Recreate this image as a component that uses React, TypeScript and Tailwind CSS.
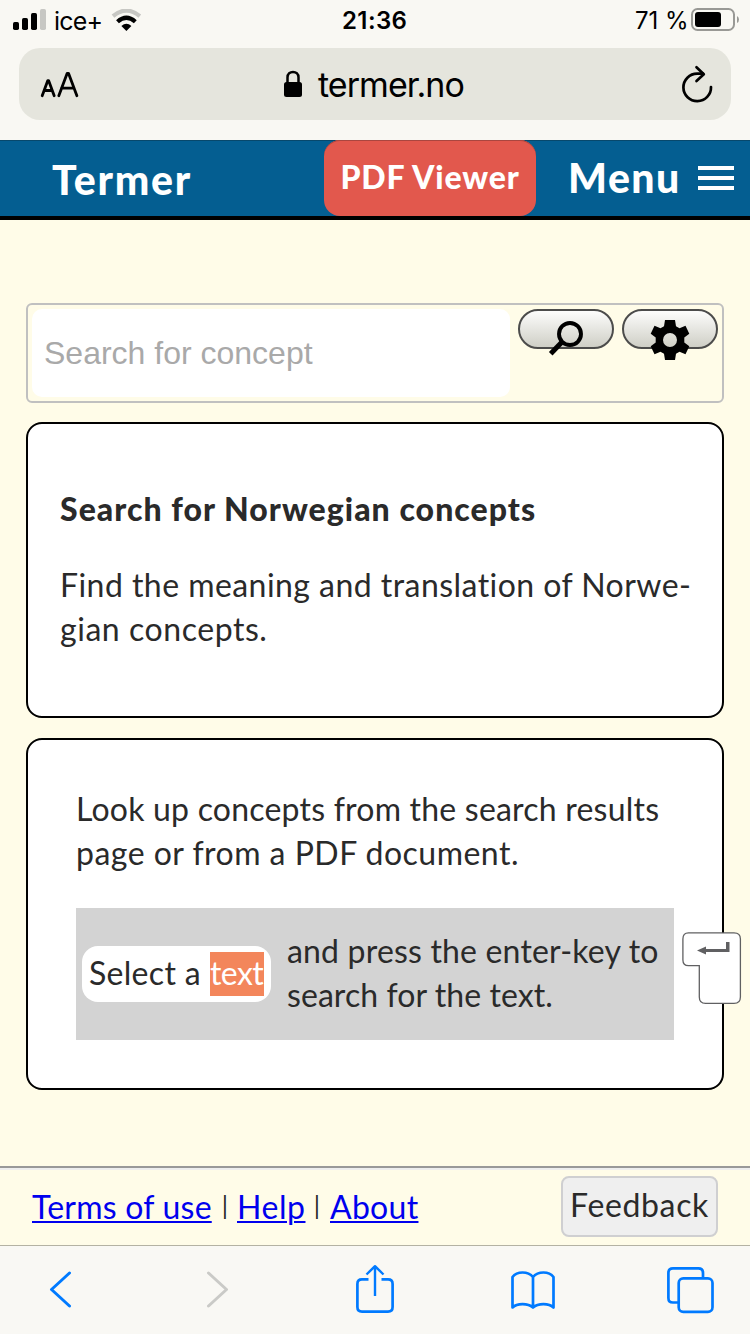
import type { ReactNode } from 'react';

function StatusBar() {
  return (
    <div className="flex h-10 shrink-0 items-start">
      <svg className="ml-[13px] mt-[9px] h-[21px] w-[33px] shrink-0" viewBox="0 0 33 21">
        <rect x="0" y="13" width="6" height="8" rx="1.7" />
        <rect x="9" y="9" width="6" height="12" rx="1.7" />
        <rect x="18" y="4" width="6" height="17" rx="1.7" />
        <rect x="27" y="0" width="6" height="21" rx="1.7" fill="#c7c7c3" />
      </svg>
      <span className="ml-2 mt-[5px] w-[50px] whitespace-nowrap text-[25px] leading-8 tracking-[-0.8px]">ice+</span>
      <svg className="ml-[7px] mt-[9px] h-[22px] w-[31px] shrink-0" viewBox="0 0 31 22" fill="none">
        <path d="M2 7.2Q15.400 -4 28.800 7.200" stroke="#c7c7c3" strokeWidth="4.200" />
        <path d="M6.500 12.800Q15.400 4.800 24.300 12.800" stroke="#000" strokeWidth="4.200" />
        <path d="M10.400 17.100Q15.400 12.600 20.400 17.100L15.400 22Z" fill="#000" />
      </svg>
      <span className="ml-[200px] mt-[5px] w-[80px] whitespace-nowrap text-2xl font-semibold leading-8 tracking-[0.4px]">21:36</span>
      <span className="ml-[213px] mt-[5px] w-[54px] whitespace-nowrap text-2xl leading-8">71 %</span>
      <svg className="ml-[2px] mt-2 h-[23px] w-[49px] shrink-0" viewBox="0 0 49 23" fill="none">
        <rect x="1" y="1" width="42" height="21" rx="5.500" stroke="#999995" strokeWidth="2" />
        <rect x="4" y="4" width="26" height="15" rx="3" fill="#000" />
        <path d="M46 8Q48 9 48 11.500Q48 14 46 15Z" fill="#999995" />
      </svg>
    </div>
  );
}

function AddressBar() {
  return (
    <div className="mx-[19px] mt-2 flex h-[72px] shrink-0 items-start rounded-[21px] bg-[#e5e5dd]">
      <svg className="ml-[21px] mt-[23px] h-[28px] w-[40px] shrink-0" viewBox="0 0 40 28" fill="none" stroke="#000" strokeWidth="2.800" strokeLinecap="round" strokeLinejoin="round">
        <path d="M2.200 24.700 7.800 9.600h.8L14.200 24.700M4.200 19.500h8" />
        <path d="M18.800 24.700 27.200 2.300h1.300L36.900 24.700M21.500 17.200h12.500" />
      </svg>
      <svg className="ml-[204px] mt-[22px] h-[27px] w-[18px] shrink-0" viewBox="0 0 18 27" fill="none">
        <path d="M3.500 13V7.500C3.500 0 14.500 0 14.500 7.500V13" stroke="#000" strokeWidth="2.500" />
        <rect x="0" y="12" width="18" height="15" rx="2.500" fill="#000" />
      </svg>
      <span className="ml-[16px] mt-[17px] w-[160px] whitespace-nowrap text-[34px] leading-10 tracking-[-0.95px]">termer.no</span>
      <svg className="ml-[203px] mt-[17px] h-[38px] w-[32px] shrink-0" viewBox="0 0 32 38" fill="none" stroke="#000" strokeWidth="2.700" strokeLinecap="round" strokeLinejoin="round">
        <path d="M30 22A13.800 13.800 0 1 1 16.200 8.600H22" />
        <path d="M15.500 2.300 22.800 9.200 15.500 16" />
      </svg>
    </div>
  );
}

function NavBar() {
  return (
    <header className="flex h-20 shrink-0 items-start border-b-4 border-black bg-[#045e91] font-bold text-white shadow-[inset_0_1px_0_#07486c]">
      <span className="ml-[52px] mt-[15px] w-[272px] text-[41px] font-black leading-[50px] tracking-[1.800px]">Termer</span>
      <button className="h-[76px] w-[212px] shrink-0 whitespace-nowrap rounded-2xl bg-[#e2584d] pb-[2px] text-center text-[32px] font-black leading-10 tracking-[0.850px] shadow-[inset_0_1px_0_#aa463f]">
        PDF Viewer
      </button>
      <span className="ml-[32px] mt-[13px] w-[130px] text-[41px] font-black leading-[50px] tracking-[1.500px]">Menu</span>
      <svg className="mt-[26px] h-6 w-9 shrink-0" viewBox="0 0 36 24" fill="#fff">
        <path d="M0 0h36v4H0zM0 10h36v4H0zM0 20h36v4H0z" />
      </svg>
    </header>
  );
}

function ToolButton({ label, children }: { label: string; children: ReactNode }) {
  return (
    <button
      aria-label={label}
      className="ml-2 flex h-10 w-24 shrink-0 items-start justify-center rounded-full border-2 border-[#4c4c4b] bg-linear-to-b from-[#fdfdfc] to-[#cfcfc6]"
    >
      {children}
    </button>
  );
}

function SearchForm() {
  return (
    <form className="flex h-[100px] shrink-0 items-start rounded-md border-2 border-[#c0c0c0] p-1">
      <input
        placeholder="Search for concept"
        className="h-[88px] w-[478px] rounded-[10px] bg-white pl-3 font-['Liberation_Sans',sans-serif] text-[32px] placeholder:text-[#a9a9a9]"
      />
      <ToolButton label="Search">
        <svg className="-ml-[2px] mt-[9px] h-9 w-9 shrink-0" viewBox="0 0 36 36" fill="none" stroke="#000">
          <circle cx="23" cy="14" r="11" strokeWidth="3.900" />
          <path d="M14.500 22.500 3.700 33.700" strokeWidth="5" />
        </svg>
      </ToolButton>
      <ToolButton label="Settings">
        <svg className="mt-[9px] h-10 w-10 shrink-0" viewBox="0 0 40 40">
          <path
            fillRule="evenodd"
            d="M15 0H25L26 6.200 29.500 8.200 35.500 5.800 39.300 13.700 34.300 17.500V22.500L39.300 26.300 35.500 34.200 29.500 31.800 26 33.800 25 40H15L14 33.800 10.500 31.800 4.500 34.200.7 26.300 5.700 22.500V17.500L.7 13.700 4.500 5.800 10.500 8.200 14 6.200ZM20 13A7 7 0 1 0 20 27A7 7 0 1 0 20 13Z"
          />
        </svg>
      </ToolButton>
    </form>
  );
}

function EnterKey() {
  return (
    <svg className="absolute left-[654px] top-[192px] h-[73px] w-[60px]" viewBox="0 0 60 73">
      <path
        d="M6.500 .9H52Q58.400 .9 58.400 7V65Q58.400 71.400 52 71.400H23.500Q17.300 71.400 17.300 65V33.700H6.500Q.9 33.700 .9 28V7Q.9 .9 6.500 .9Z"
        fill="#fff"
        stroke="#606062"
        strokeWidth="1.300"
      />
      <path d="M15 18.500 24 14.500V17H44V10H47.500V20H24V22.500Z" fill="#606062" />
    </svg>
  );
}

function SearchCard() {
  return (
    <section className="mt-[19px] h-[296px] shrink-0 rounded-2xl border-2 border-black bg-white pl-[32px] pt-[63px] leading-[44px]">
      <h2 className="whitespace-nowrap font-black tracking-[1.030px]">Search for Norwegian concepts</h2>
      <p className="mt-8 whitespace-nowrap tracking-[0.450px]">
        Find the meaning and translation of Norwe-
        <br />
        <span className="tracking-[0.550px]">gian concepts.</span>
      </p>
    </section>
  );
}

function LookupCard() {
  return (
    <section className="relative mt-5 h-[352px] shrink-0 rounded-2xl border-2 border-black bg-white pl-12 pt-[47px] leading-[44px]">
      <p className="whitespace-nowrap tracking-[0.210px]">
        Look up concepts from the search results
        <br />
        <span className="tracking-[0.470px]">page or from a PDF document.</span>
      </p>
      <div className="mt-[33px] flex h-[132px] w-[598px] items-center bg-[#d3d3d3] pl-1.5">
        <div className="flex h-14 w-[189px] shrink-0 items-center whitespace-nowrap rounded-2xl bg-white pl-[7px]">
          <span className="h-11 w-[121px] leading-[42px] tracking-[0.300px]">Select a</span>
          <span className="h-11 w-[54px] bg-[#f3865b] leading-[42px] tracking-[-0.600px] text-white">text</span>
        </div>
        <p className="-mt-[2px] ml-[16px] whitespace-nowrap tracking-[0.180px]">
          and press the enter-key to
          <br />
          <span className="tracking-[0.070px]">search for the text.</span>
        </p>
      </div>
      <EnterKey />
    </section>
  );
}

const linkClass = 'text-[#0000ee] underline decoration-2 underline-offset-[2px]';

function Footer() {
  return (
    <footer className="flex h-[79px] shrink-0 items-start whitespace-nowrap border-t-2 border-[#999999] pl-8 leading-[44px] shadow-[inset_0_2px_0_#eeeeee]">
      <a className={`mt-[17px] w-[180px] tracking-[0.220px] ${linkClass}`}>Terms of use</a>
      <span className="mt-[15px] w-[26px] text-center text-[25px]">|</span>
      <a className={`mt-[17px] w-[67px] -ml-px tracking-[0.540px] ${linkClass}`}>Help</a>
      <span className="mt-[15px] w-[26px] text-center text-[25px]">|</span>
      <a className={`mt-[17px] w-[89px] tracking-[0.300px] ${linkClass}`}>About</a>
      <button className="ml-[142px] mt-2 h-[61px] w-[157px] rounded-lg border-2 border-[#cfcfd1] bg-[#efefef] pb-1 text-center tracking-[0.640px]">
        Feedback
      </button>
    </footer>
  );
}

function ToolBar() {
  return (
    <nav className="flex h-[89px] shrink-0 items-start border-t border-[#b4b2a3] bg-[#f9f8f4] text-[#007aff]">
      <svg className="ml-[49px] mt-[25px] h-[38px] w-[24px] shrink-0" viewBox="0 0 24 38" fill="none" stroke="currentColor" strokeWidth="3" strokeLinecap="round" strokeLinejoin="round">
        <path d="M20.500 2 2.500 18.500 20.500 35" />
      </svg>
      <svg className="ml-[132px] mt-[25px] h-[38px] w-[24px] shrink-0 text-[#cacac7]" viewBox="0 0 24 38" fill="none" stroke="currentColor" strokeWidth="3" strokeLinecap="round" strokeLinejoin="round">
        <path d="M3.500 2 21.500 18.500 3.500 35" />
      </svg>
      <svg className="ml-[127px] mt-[18px] h-[50px] w-[38px] shrink-0" viewBox="0 0 38 50" fill="none" stroke="currentColor" strokeWidth="2.700" strokeLinejoin="round">
        <path d="M12.500 15.400H6Q1.400 15.400 1.400 20V43Q1.400 47.600 6 47.600H32Q36.600 47.600 36.600 43V20Q36.600 15.400 32 15.400H25.500" />
        <path d="M19 32V3M10.500 10.500 19 2.200 27.500 10.500" strokeWidth="2.400" />
      </svg>
      <svg className="ml-[117px] mt-[25px] h-[40px] w-[44px] shrink-0" viewBox="0 0 44 40" fill="none" stroke="currentColor" strokeWidth="2.700" strokeLinejoin="round">
        <path d="M22 6C17 0 6 0 1.500 6V36.500C6 32 17 32 22 36.500C27 32 38 32 42.500 36.500V6C38 0 27 0 22 6ZV36.500" />
      </svg>
      <svg className="ml-[112px] mt-[21px] h-[47px] w-[48px] shrink-0" viewBox="0 0 48 47" fill="none" stroke="currentColor" strokeWidth="2.700">
        <path d="M11.500 35.500H6Q1.400 35.500 1.400 31V6Q1.400 1.400 6 1.400H31.500Q36 1.400 36 6V11.500" />
        <rect x="11.700" y="11.300" width="33.800" height="33.600" rx="4.600" />
      </svg>
    </nav>
  );
}

export default function App() {
  return (
    <div className="flex h-[1334px] w-[750px] flex-col overflow-hidden bg-[#fffce8] font-['Lato',sans-serif] text-[32px] text-[#2a2a2a]">
      <div className="flex h-[140px] shrink-0 flex-col bg-[#f9f8f3] font-['Inter',sans-serif] text-black">
        <StatusBar />
        <AddressBar />
      </div>
      <NavBar />
      <main className="flex h-[946px] shrink-0 flex-col px-[26px] pt-[83px]">
        <SearchForm />
        <SearchCard />
        <LookupCard />
      </main>
      <Footer />
      <ToolBar />
    </div>
  );
}
